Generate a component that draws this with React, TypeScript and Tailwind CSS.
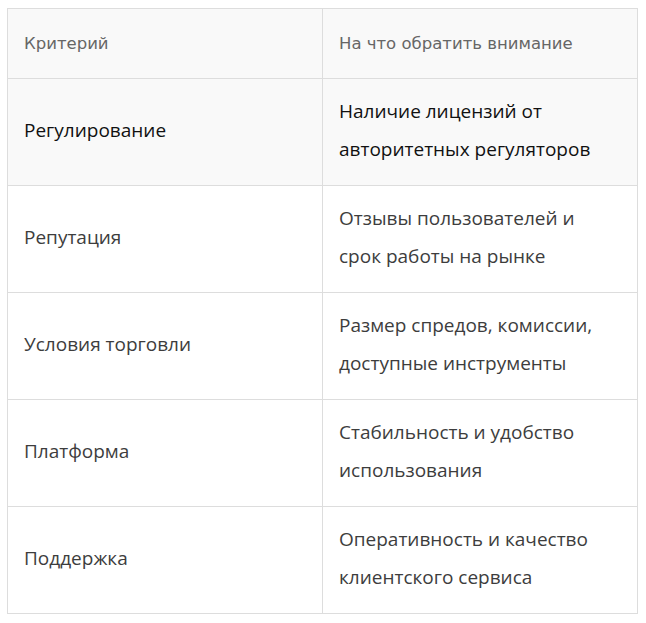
import React from 'react';

const rows = [
  { name: 'Регулирование', note: ['Наличие лицензий от', 'авторитетных регуляторов'] },
  { name: 'Репутация', note: ['Отзывы пользователей и', 'срок работы на рынке'] },
  { name: 'Условия торговли', note: ['Размер спредов, комиссии,', 'доступные инструменты'] },
  { name: 'Платформа', note: ['Стабильность и удобство', 'использования'] },
  { name: 'Поддержка', note: ['Оперативность и качество', 'клиентского сервиса'] },
];

const App: React.FC = () => {
  return (
    <div className="bg-white w-[646px] h-[623px] pt-[8px] pl-[7px]">
      <table className="w-[631px] table-fixed border-collapse border border-[#dddddd] font-['Open_Sans',sans-serif]">
        <thead>
          <tr className="bg-[#f9f9f9]">
            <th className="w-1/2 border border-[#dddddd] px-[16px] pt-[16px] pb-[15px] text-left font-normal text-[16.5px] leading-[38px] text-[#666666] font-['DejaVu_Sans',sans-serif]">
              Критерий
            </th>
            <th className="w-1/2 border border-[#dddddd] px-[16px] pt-[16px] pb-[15px] text-left font-normal text-[16.5px] leading-[38px] text-[#666666] font-['DejaVu_Sans',sans-serif]">
              На что обратить внимание
            </th>
          </tr>
        </thead>
        <tbody>
          {rows.map((r, i) => (
            <tr key={r.name} className={i === 0 ? 'bg-[#f9f9f9] text-[#111111]' : 'bg-white text-[#3d3d3d]'}>
              <td className="border border-[#dddddd] px-[16px] pt-[13px] pb-[17px] text-[19px] leading-[38px] align-middle whitespace-nowrap">
                {r.name}
              </td>
              <td className="border border-[#dddddd] px-[16px] pt-[13px] pb-[17px] text-[19px] leading-[38px] align-middle whitespace-nowrap">
                {r.note[0]}
                <br />
                {r.note[1]}
              </td>
            </tr>
          ))}
        </tbody>
      </table>
    </div>
  );
};

export default App;
